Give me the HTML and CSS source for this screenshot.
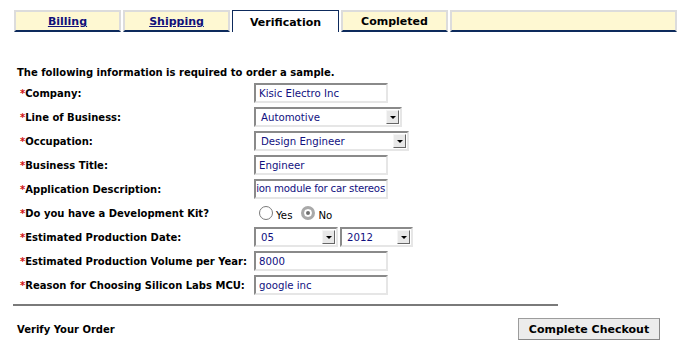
FILE: index.html
```html
<!DOCTYPE html>
<html lang="en">
<head>
    <meta charset="UTF-8">
    <title>Checkout - Verification</title>
    <link rel="stylesheet" href="styles.css">
</head>
<body>
    <div class="tabs">
        <a class="tab" href="#">Billing</a>
        <a class="tab" href="#">Shipping</a>
        <span class="tab active">Verification</span>
        <span class="tab plain">Completed</span>
        <span class="tab filler"></span>
    </div>

    <form class="order-form">
        <p class="intro">The following information is required to order a sample.</p>

        <div class="fields">
            <label class="field-label"><span class="req">*</span>Company:</label>
            <div><input class="text-input" type="text" value="Kisic Electro Inc"></div>

            <label class="field-label"><span class="req">*</span>Line of Business:</label>
            <div><span class="select-box wide"><span class="select-value">Automotive</span><span class="arrow"></span></span></div>

            <label class="field-label"><span class="req">*</span>Occupation:</label>
            <div><span class="select-box wider"><span class="select-value">Design Engineer</span><span class="arrow"></span></span></div>

            <label class="field-label"><span class="req">*</span>Business Title:</label>
            <div><input class="text-input" type="text" value="Engineer"></div>

            <label class="field-label"><span class="req">*</span>Application Description:</label>
            <div><span class="text-input clipped"><span>ion module for car stereos</span></span></div>

            <label class="field-label"><span class="req">*</span>Do you have a Development Kit?</label>
            <div class="radios">
                <span class="radio"></span><span class="radio-text">Yes</span>
                <span class="radio checked"></span><span class="radio-text">No</span>
            </div>

            <label class="field-label"><span class="req">*</span>Estimated Production Date:</label>
            <div class="date-row">
                <span class="select-box month"><span class="select-value">05</span><span class="arrow"></span></span>
                <span class="select-box year"><span class="select-value">2012</span><span class="arrow"></span></span>
            </div>

            <label class="field-label"><span class="req">*</span>Estimated Production Volume per Year:</label>
            <div><input class="text-input" type="text" value="8000"></div>

            <label class="field-label"><span class="req">*</span>Reason for Choosing Silicon Labs MCU:</label>
            <div><input class="text-input" type="text" value="google inc"></div>
        </div>

        <hr class="divider">

        <div class="footer">
            <span class="verify">Verify Your Order</span>
            <button type="button" class="checkout">Complete Checkout</button>
        </div>
    </form>
</body>
</html>
```

FILE: styles.css
```css
body {
    margin: 0;
    background-color: #fff;
    font-family: "DejaVu Sans", Verdana, sans-serif;
    font-size: 10px;
    color: #000;
}
.tabs {
    display: flex;
    gap: 2px;
    margin: 10px 0 0 14px;
    height: 22px;
}
.tab {
    box-sizing: border-box;
    width: 107px;
    height: 22px;
    padding-top: 1px;
    background-color: #fef8d2;
    border: 2px solid #dcdcdc;
    border-bottom: 2px solid #0d2a5c;
    text-align: center;
    font-weight: bold;
    font-size: 11px;
    line-height: 18px;
    color: #10107a;
    text-decoration: underline;
}
.tab.plain {
    color: #000;
    text-decoration: none;
}
.tab.active {
    padding-top: 2px;
    background-color: #fff;
    border: 1px solid #0d2a5c;
    border-bottom: none;
    color: #000;
    text-decoration: none;
    line-height: 20px;
}
.tab.filler {
    flex: 1;
    width: auto;
}
.order-form {
    margin: 0;
    padding: 34px 0 0 17px;
}
.intro {
    margin: 0 0 1px 0;
    font-weight: bold;
    font-size: 10px;
    line-height: 14px;
}
.fields {
    display: grid;
    grid-template-columns: 237px auto;
    grid-auto-rows: 24px;
    align-items: center;
}
.field-label {
    font-weight: bold;
    font-size: 10px;
    padding-left: 3px;
    white-space: nowrap;
}
.req {
    color: #d01010;
}
.text-input {
    box-sizing: border-box;
    display: block;
    width: 134px;
    height: 20px;
    margin: 0;
    padding: 0 3px;
    border: 2px solid #e6e6e6;
    border-top-color: #8a8a8a;
    border-left-color: #8a8a8a;
    font-family: "DejaVu Sans", Verdana, sans-serif;
    font-size: 10.2px;
    line-height: 16px;
    color: #11117f;
    background: #fff;
}
.text-input.clipped {
    display: flex;
    justify-content: flex-end;
    overflow: hidden;
    white-space: nowrap;
    padding: 0 1px;
    letter-spacing: -0.2px;
}
.select-box {
    box-sizing: border-box;
    display: flex;
    align-items: center;
    justify-content: space-between;
    height: 20px;
    border: 2px solid #e6e6e6;
    border-top-color: #8a8a8a;
    border-left-color: #8a8a8a;
    background: #fff;
    font-size: 10.2px;
    color: #11117f;
}
.select-box.wide {
    width: 148px;
}
.select-box.wider {
    width: 155px;
}
.select-box.month {
    width: 84px;
}
.select-box.year {
    width: 73px;
}
.select-value {
    padding-left: 5px;
}
.arrow {
    position: relative;
    box-sizing: border-box;
    width: 13px;
    height: 14px;
    margin-right: 1px;
    background: #e8e8e8;
    border: 1px solid #f5f5f5;
    border-right-color: #666;
    border-bottom-color: #666;
}
.arrow::after {
    content: "";
    position: absolute;
    left: 3px;
    top: 5px;
    border-left: 3px solid transparent;
    border-right: 3px solid transparent;
    border-top: 3px solid #000;
}
.date-row {
    display: flex;
    gap: 2px;
}
.radios {
    display: flex;
    align-items: center;
    padding-left: 5px;
}
.radio {
    box-sizing: border-box;
    width: 14px;
    height: 14px;
    border-radius: 50%;
    border: 1px solid #7a7a7a;
    background: #fff;
}
.radio.checked {
    border: 3px solid #a9a9a9;
    background: #fff;
    box-shadow: inset 0 0 0 2px #fff, inset 0 0 0 4px #6f6f6f;
}
.radio-text {
    margin: 5px 9px 0 3px;
    font-size: 10.2px;
    color: #000;
}
.divider {
    width: 545px;
    margin: 7px 0 0 -4px;
    border: none;
    border-top: 2px solid #7a7a7a;
}
.footer {
    display: flex;
    align-items: center;
    justify-content: space-between;
    width: 643px;
    margin-top: 12px;
}
.verify {
    font-weight: bold;
    font-size: 10px;
}
.checkout {
    width: 142px;
    height: 22px;
    padding: 0;
    background: #ececec;
    border: 1px solid #9c9c9c;
    border-bottom-color: #888;
    border-right-color: #888;
    font-family: "DejaVu Sans", Verdana, sans-serif;
    font-weight: bold;
    font-size: 11px;
    color: #000;
}
```
